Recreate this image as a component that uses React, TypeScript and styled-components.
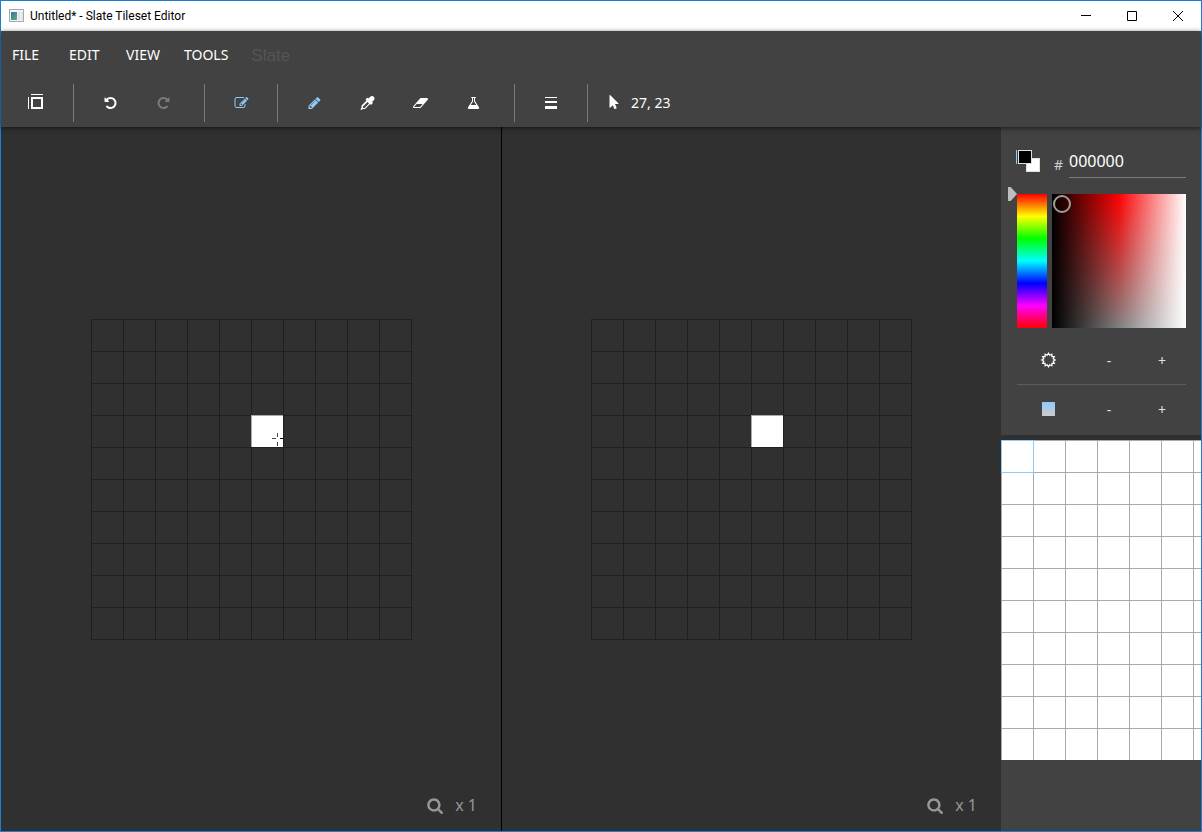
import React from "react";
import styled, { createGlobalStyle } from "styled-components";

const color = {
  frame: "#1a7fd3",
  panel: "#424242",
  canvas: "#303030",
  line: "#202020",
  accent: "#90caf9",
  text: "#ffffff",
};

const Global = createGlobalStyle`
  *, *::before, *::after { box-sizing: border-box; }
  body { margin: 0; font-family: "Noto Sans", sans-serif; font-size: 14px; color: ${color.text}; }
  button, input { font: inherit; color: inherit; }
  button { padding: 0; border: 0; background: none; }
  svg { display: block; }
`;

const Window = styled.div`
  display: flex;
  flex-direction: column;
  min-height: 100vh;
  border: 1px solid ${color.frame};
  background: ${color.canvas};
`;

const TitleBar = styled.header`
  display: flex;
  align-items: center;
  height: 30px;
  padding-left: 8px;
  background: #fff;
  color: #000;
`;

const Title = styled.h1`
  flex: 1;
  margin: 0 0 0 5px;
  font: 400 12px/16px Roboto, sans-serif;
`;

const WindowButton = styled.button`
  display: grid;
  place-items: center;
  width: 46px;
  height: 30px;
`;

const Header = styled.div`
  position: relative;
  z-index: 1;
  background: ${color.panel};
  box-shadow: 0 1px 5px rgba(0, 0, 0, 0.6);
`;

const MenuBar = styled.nav`
  display: flex;
  align-items: center;
  height: 48px;
`;

const MenuButton = styled.button`
  min-width: 57px;
  height: 48px;
  padding: 0 13px 2px 11px;
  text-align: left;
  white-space: nowrap;
`;

const Brand = styled.span`
  padding: 2px 0 0 10px;
  font: 17px/24px "Liberation Sans", sans-serif;
  color: #555;
`;

const ToolBar = styled.div`
  display: flex;
  align-items: center;
  height: 48px;
  padding-left: 12px;
`;

const ToolGroup = styled.div<{ $wide?: boolean }>`
  display: flex;
  gap: 5px;
  padding-right: ${(p) => (p.$wide ? 17 : 12)}px;
  margin-right: 12px;
  border-right: 1px solid #7b7b7b;
  height: 38px;
`;

const ToolButton = styled.button<{ $active?: boolean }>`
  display: grid;
  place-items: center;
  width: 48px;
  height: 38px;
  color: ${(p) => (p.$active ? color.accent : color.text)};

  &:disabled {
    color: #7b7b7b;
  }
`;

const Pointer = styled.output`
  display: flex;
  align-items: center;
  gap: 10px;
  padding: 0 0 2px 7px;
`;

const Main = styled.main`
  display: flex;
  flex: 1;
`;

const Pane = styled.section`
  position: relative;
  display: grid;
  place-items: center;
  flex: 1;
  min-width: 0;
  border-left: 1px solid transparent;

  & + & {
    border-left-color: #000;
  }
`;

const ZoomLevel = styled.div`
  position: absolute;
  right: 24px;
  bottom: 14px;
  display: flex;
  align-items: center;
  gap: 12px;
  font-size: 16px;
  line-height: 24px;
  color: #979797;
`;

const Sidebar = styled.aside`
  display: flex;
  flex-direction: column;
  width: 200px;
  background: ${color.panel};
`;

const ColorPanel = styled.div`
  padding: 16px 15px 2px 16px;
`;

const HexRow = styled.div`
  display: flex;
  align-items: stretch;
  height: 35px;
  margin-bottom: 16px;
`;

const Swatches = styled.div`
  position: relative;
  width: 37px;
`;

const Swatch = styled.button<{ $fill: string; $front?: boolean }>`
  position: absolute;
  left: ${(p) => (p.$front ? 1 : 9)}px;
  top: ${(p) => (p.$front ? 7 : 15)}px;
  width: 14px;
  height: 14px;
  background: ${(p) => p.$fill};
  border: 1px solid #e0e0e0;
  outline: 0;
  box-shadow: ${(p) => (p.$front ? `-1px 0 0 0 ${color.panel}, -2px 0 0 0 ${color.accent}` : "none")};
`;

const HexLabel = styled.label`
  display: flex;
  align-items: center;
  width: 15px;
  padding-top: 8px;
  color: #d0d0d0;
`;

const HexInput = styled.input`
  flex: 1;
  min-width: 0;
  padding: 2px 0 0;
  border: 0;
  border-bottom: 1px solid #7b7b7b;
  background: none;
  font-size: 16px;
  outline: 0;
`;

const Picker = styled.div`
  display: flex;
  height: 134px;
`;

const HueSlider = styled.input`
  appearance: none;
  writing-mode: vertical-lr;
  width: 9px;
  height: 148px;
  margin: -7px 0 -7px -9px;
  background: none;

  &::-webkit-slider-thumb {
    appearance: none;
    width: 9px;
    height: 14px;
    background: #bdbdbd;
    clip-path: polygon(0 0, 30% 0, 100% 50%, 30% 100%, 0 100%);
  }
`;

const HueBar = styled.div`
  width: 30px;
  margin-right: 5px;
  background: linear-gradient(#f00, #ff0, #0f0, #0ff, #00f, #f0f, #f00);
`;

const Shade = styled.div`
  position: relative;
  flex: 1;
  background: linear-gradient(to right, #000, #f00, #fff);

  &::before {
    content: "";
    position: absolute;
    inset: 0;
    background: linear-gradient(to right, #000, #fff);
    mask-image: linear-gradient(transparent, #000);
  }

  &::after {
    content: "";
    position: absolute;
    left: 1px;
    top: 1px;
    width: 18px;
    height: 18px;
    border: 2px solid #9e9e9e;
    border-radius: 50%;
  }
`;

const AdjustRow = styled.div`
  display: flex;
  align-items: center;
  gap: 5px;
  height: 48px;

  ${Picker} + & {
    margin-top: 8px;
  }

  & + & {
    height: 49px;
    border-top: 1px solid #5c5c5c;
  }
`;

const AdjustIcon = styled.span`
  display: grid;
  place-items: center;
  flex: 1;
`;

const StepButton = styled.button`
  width: 48px;
  height: 48px;
  color: #e0e0e0;
`;

const Tileset = styled.div`
  height: 325px;
  padding-top: 5px;
  background: ${color.canvas};
`;

const UNDO =
  "M1664 896q0 156-61 298t-164 245-245 164-298 61q-172 0-327-72.5t-264-204.5q-7-10-6.5-22.5t8.5-20.5l137-138q10-9 25-9 16 2 23 12 73 95 179 147t225 52q104 0 198.5-40.5t163.5-109.5 109.5-163.5 40.5-198.5-40.5-198.5-109.5-163.5-163.5-109.5-198.5-40.5q-98 0-188 35.5t-160 101.5l137 138q31 30 14 69-17 40-59 40h-448q-26 0-45-19t-19-45v-448q0-42 40-59 39-17 69 14l130 129q107-101 244.5-156.5t284.5-55.5q156 0 298 61t245 164 164 245 61 298z";
const REDO =
  "M1664 256v448q0 26-19 45t-45 19h-448q-42 0-59-40-17-39 14-69l138-138q-148-137-349-137-104 0-198.5 40.5t-163.5 109.5-109.5 163.5-40.5 198.5 40.5 198.5 109.5 163.5 163.5 109.5 198.5 40.5q119 0 225-52t179-147q7-10 23-12 15 0 25 9l137 138q9 8 9.5 20.5t-7.5 22.5q-109 132-264 204.5t-327 72.5q-156 0-298-61t-245-164-164-245-61-298 61-298 164-245 245-164 298-61q147 0 284.5 55.5t244.5 156.5l130-129q29-31 70-14 39 17 39 59z";
const EDIT =
  "M888 1184l116-116-152-152-116 116v56h96v96h56zm440-720q-16-16-33 1l-350 350q-17 17-1 33t33-1l350-350q17-17 1-33zm80 594v190q0 119-84.5 203.5t-203.5 84.5h-832q-119 0-203.5-84.5t-84.5-203.5v-832q0-119 84.5-203.5t203.5-84.5h832q63 0 117 25 15 7 18 23 3 17-9 29l-49 49q-14 14-32 8-23-6-45-6h-832q-66 0-113 47t-47 113v832q0 66 47 113t113 47h832q66 0 113-47t47-113v-126q0-13 9-22l64-64q15-15 35-7t20 29zm-96-738l288 288-672 672h-288v-288zm444 132l-92 92-288-288 92-92q28-28 68-28t68 28l152 152q28 28 28 68t-28 68z";
const PENCIL =
  "M491 1536l91-91-235-235-91 91v107h128v128h107zm523-928q0-22-22-22-10 0-17 7l-542 542q-7 7-7 17 0 22 22 22 10 0 17-7l542-542q7-7 7-17zm-54-192l416 416-832 832h-416v-416zm683 96q0 53-37 90l-166 166-416-416 166-165q36-38 90-38 53 0 91 38l235 234q37 39 37 91z";
const DROPPER =
  "M1698 94q94 94 94 226.5t-94 225.5l-225 223 104 104q10 10 10 23t-10 23l-210 210q-10 10-23 10t-23-10l-105-105-603 603q-37 37-90 37h-203l-256 128-64-64 128-256v-203q0-53 37-90l603-603-105-105q-10-10-10-23t10-23l210-210q10-10 23-10t23 10l104 104 223-225q93-94 225.5-94t226.5 94zm-1186 1442l576-576-192-192-576 576v192h192z";
const ERASER =
  "M832 1408l336-384h-768l-336 384h768zm1013-1077q15 34 9.5 71.5t-30.5 65.5l-896 1024q-38 44-96 44h-768q-38 0-69.5-20.5t-47.5-54.5q-15-34-9.5-71.5t30.5-65.5l896-1024q38-44 96-44h768q38 0 69.5 20.5t47.5 54.5z";
const FLASK =
  "M1591 1448q56 89 21.5 152.5t-140.5 63.5h-1152q-106 0-140.5-63.5t21.5-152.5l503-793v-399h-64q-26 0-45-19t-19-45 19-45 45-19h512q26 0 45 19t19 45-19 45-45 19h-64v399zm-779-725l-272 429h712l-272-429-20-31v-436h-128v436z";
const CURSOR =
  "M1389 1043q31 30 14 69-17 40-59 40h-382l201 476q10 25 0 49t-34 35l-177 75q-25 10-49 0t-35-34l-191-452-312 312q-19 19-45 19-12 0-24-5-40-17-40-59v-1504q0-42 40-59 12-5 24-5 27 0 45 19z";
const SEARCH =
  "M1216 832q0-185-131.5-316.5t-316.5-131.5-316.5 131.5-131.5 316.5 131.5 316.5 316.5 131.5 316.5-131.5 131.5-316.5zm512 832q0 52-38 90t-90 38q-54 0-90-38l-343-342q-179 124-399 124-143 0-273.5-55.5t-225-150-150-225-55.5-273.5 55.5-273.5 150-225 225-150 273.5-55.5 273.5 55.5 225 150 150 225 55.5 273.5q0 220-124 399l343 343q37 37 37 90z";

function Icon({ path, size = 14, width = 1792 }: { path: string; size?: number; width?: number }) {
  return (
    <svg
      width={Math.round((size * width) / 1792)}
      height={size}
      viewBox={`-64 0 ${width} 1792`}
      fill="currentColor"
      overflow="visible"
      aria-hidden="true"
    >
      <path d={path} />
    </svg>
  );
}

const sunPoints = Array.from({ length: 24 }, (_, i) => {
  const angle = (i * Math.PI) / 12 - Math.PI / 2;
  const radius = i % 2 ? 4.9 : 6.7;
  return `${(6.5 + radius * Math.cos(angle)).toFixed(2)},${(7 + radius * Math.sin(angle)).toFixed(2)}`;
}).join(" ");

const CELL = 32;
const COUNT = 10;

function TileCanvas({ crosshair }: { crosshair?: boolean }) {
  const size = CELL * COUNT + 1;
  const lines = Array.from({ length: COUNT + 1 }, (_, i) => i * CELL);
  return (
    <svg width={size} height={size} shapeRendering="crispEdges" role="img" aria-label="Tile canvas">
      {lines.map((n) => (
        <g key={n} fill={color.line}>
          <rect x={n} y={0} width={1} height={size} />
          <rect x={0} y={n} width={size} height={1} />
        </g>
      ))}
      <rect x={160} y={96} width={32} height={32} fill="#aaa" />
      <rect x={161} y={97} width={31} height={31} fill="#fff" />
      {crosshair && (
        <>
          <path d="M180 119h4M186 113v4M186 122v4" transform="translate(.5 .5)" stroke="#4a4a4a" />
          <path d="M189 119.5h4" stroke="#000" />
        </>
      )}
    </svg>
  );
}

function Zoom() {
  return (
    <ZoomLevel>
      <Icon path={SEARCH} size={17} />
      <span>x 1</span>
    </ZoomLevel>
  );
}

export default function App() {
  return (
    <Window>
      <Global />
      <TitleBar>
        <svg width="16" height="14" aria-hidden="true">
          <defs>
            <linearGradient id="app" x1="0" y1="0" x2="1" y2="1">
              <stop offset="0" stopColor="#3f6f9f" />
              <stop offset="1" stopColor="#58b078" />
            </linearGradient>
          </defs>
          <rect x=".5" y=".5" width="14" height="12" fill="#f4f4f4" stroke="#a3a9ad" />
          <rect x="2" y="3" width="6" height="8" fill="url(#app)" />
          <rect x="9" y="3" width="2" height="8" fill="#dfe3e8" />
          <rect x="12" y="3" width="2" height="8" fill="#e4e4e4" />
        </svg>
        <Title>Untitled* - Slate Tileset Editor</Title>
        <WindowButton aria-label="Minimize">
          <svg width="10" height="10"><path d="M0 4.5h10" stroke="#000" /></svg>
        </WindowButton>
        <WindowButton aria-label="Maximize">
          <svg width="10" height="10"><path d="M.5.5h9v9h-9z" fill="none" stroke="#000" /></svg>
        </WindowButton>
        <WindowButton aria-label="Close">
          <svg width="10" height="10"><path d="M0 0l10 10M10 0L0 10" stroke="#000" /></svg>
        </WindowButton>
      </TitleBar>

      <Header>
        <MenuBar>
          <MenuButton>FILE</MenuButton>
          <MenuButton>EDIT</MenuButton>
          <MenuButton>VIEW</MenuButton>
          <MenuButton>TOOLS</MenuButton>
          <Brand>Slate</Brand>
        </MenuBar>
        <ToolBar>
          <ToolGroup>
            <ToolButton aria-label="Canvas size">
              <svg width="18" height="18" fill="currentColor" aria-hidden="true">
                <path d="M3 0h12v1H3zM0 3h1v12H0zM3 3h12v12H3zm2 2v8h8V5z" fillRule="evenodd" />
              </svg>
            </ToolButton>
          </ToolGroup>
          <ToolGroup $wide>
            <ToolButton aria-label="Undo"><Icon path={UNDO} /></ToolButton>
            <ToolButton aria-label="Redo" disabled><Icon path={REDO} /></ToolButton>
          </ToolGroup>
          <ToolGroup>
            <ToolButton aria-label="Edit mode" $active><Icon path={EDIT} /></ToolButton>
          </ToolGroup>
          <ToolGroup $wide>
            <ToolButton aria-label="Pen" $active><Icon path={PENCIL} /></ToolButton>
            <ToolButton aria-label="Eyedropper"><Icon path={DROPPER} /></ToolButton>
            <ToolButton aria-label="Eraser"><Icon path={ERASER} width={1920} /></ToolButton>
            <ToolButton aria-label="Fill"><Icon path={FLASK} /></ToolButton>
          </ToolGroup>
          <ToolGroup>
            <ToolButton aria-label="Tool size">
              <svg width="12" height="12" fill="currentColor" aria-hidden="true">
                <path d="M0 0h12v1H0zM0 4h12v2H0zM0 9h12v3H0z" />
              </svg>
            </ToolButton>
          </ToolGroup>
          <Pointer>
            <Icon path={CURSOR} />
            27, 23
          </Pointer>
        </ToolBar>
      </Header>

      <Main>
        <Pane>
          <TileCanvas crosshair />
          <Zoom />
        </Pane>
        <Pane>
          <TileCanvas />
          <Zoom />
        </Pane>
        <Sidebar>
          <ColorPanel>
            <HexRow>
              <Swatches>
                <Swatch $fill="#fff" aria-label="Background colour" />
                <Swatch $fill="#000" $front aria-label="Foreground colour" />
              </Swatches>
              <HexLabel htmlFor="hex">#</HexLabel>
              <HexInput id="hex" defaultValue="000000" />
            </HexRow>
            <Picker>
              <HueSlider type="range" min={0} max={360} defaultValue={0} aria-label="Hue" />
              <HueBar />
              <Shade />
            </Picker>
            <AdjustRow>
              <AdjustIcon>
                <svg width="13" height="14" overflow="visible" aria-hidden="true">
                  <polygon points={sunPoints} fill="none" stroke="#fff" strokeWidth="1.3" />
                </svg>
              </AdjustIcon>
              <StepButton aria-label="Darker">-</StepButton>
              <StepButton aria-label="Lighter">+</StepButton>
            </AdjustRow>
            <AdjustRow>
              <AdjustIcon>
                <svg width="13" height="14" aria-hidden="true">
                  <defs>
                    <linearGradient id="sat" x1="0" y1="0" x2="0" y2="1">
                      <stop offset="0" stopColor={color.accent} />
                      <stop offset="1" stopColor="#ccc" />
                    </linearGradient>
                  </defs>
                  <rect width="13" height="14" fill="url(#sat)" />
                </svg>
              </AdjustIcon>
              <StepButton aria-label="Less saturation">-</StepButton>
              <StepButton aria-label="More saturation">+</StepButton>
            </AdjustRow>
          </ColorPanel>
          <Tileset>
            <svg width="100%" height="320" shapeRendering="crispEdges" role="img" aria-label="Tileset">
              <defs>
                <pattern id="tiles" width="32" height="32" patternUnits="userSpaceOnUse">
                  <rect width="32" height="32" fill="#aaa" />
                  <rect x="1" y="1" width="31" height="31" fill="#fff" />
                </pattern>
              </defs>
              <rect width="100%" height="320" fill="url(#tiles)" />
              <rect x=".5" y=".5" width="32" height="32" fill="none" stroke={color.accent} />
            </svg>
          </Tileset>
        </Sidebar>
      </Main>
    </Window>
  );
}
